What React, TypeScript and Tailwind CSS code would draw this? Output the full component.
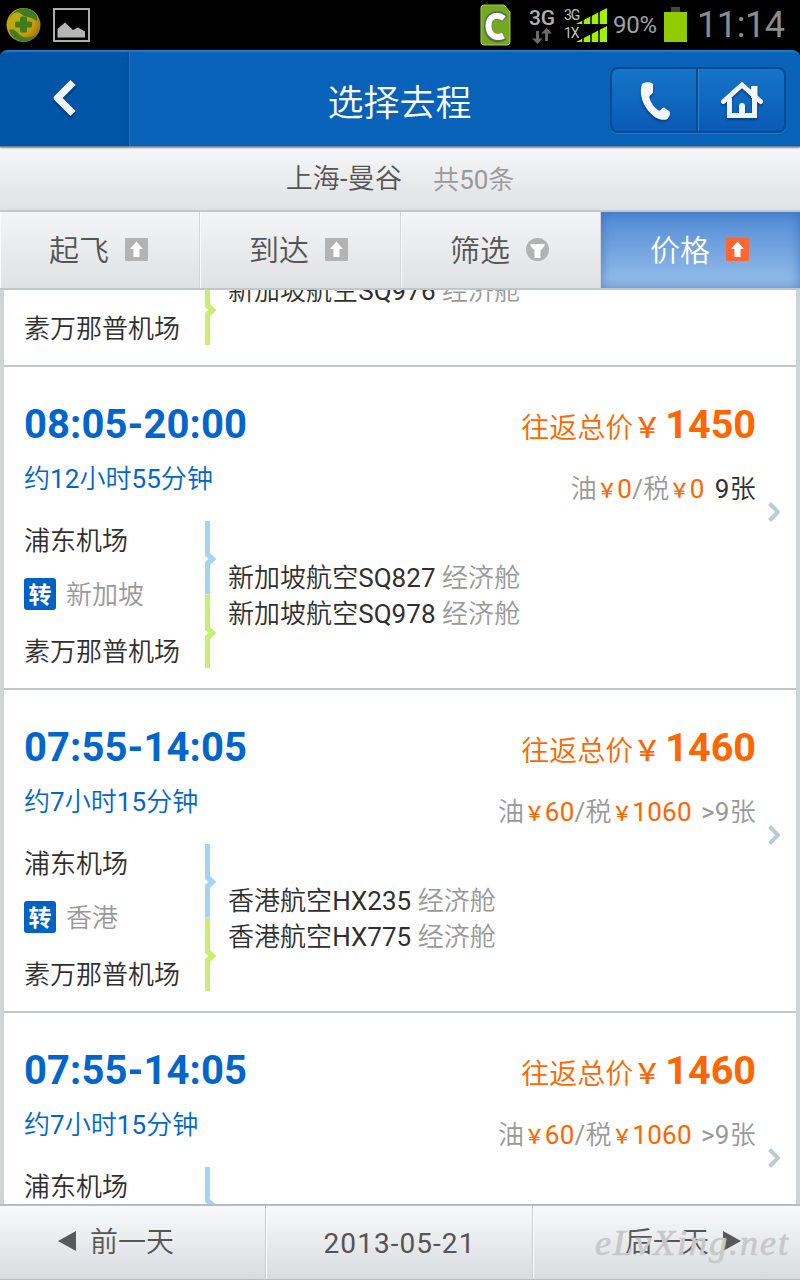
import type { ReactNode } from 'react';

const HAN = /([\u3000-\u303f\u4e00-\u9fff]+)/;

/** Sets Chinese runs in the light CJK face and leaves Latin runs and digits in Roboto. */
function Mixed({ children }: { children: string }) {
  return (
    <>
      {children.split(HAN).map((part, i) =>
        HAN.test(part) ? (
          <span key={i} className="font-['Noto_Sans_CJK_SC',sans-serif] font-[350]">
            {part}
          </span>
        ) : (
          part
        ),
      )}
    </>
  );
}

type Flight = {
  time: string;
  duration: string;
  via: string;
  price: string;
  fuel: string;
  tax: string;
  seats: string;
  scarce?: boolean;
  legs: string[];
};

const flights: Flight[] = [
  {
    time: '08:05-20:00',
    duration: '约12小时55分钟',
    via: '新加坡',
    price: '1450',
    fuel: '0',
    tax: '0',
    seats: '9张',
    scarce: true,
    legs: ['新加坡航空SQ827', '新加坡航空SQ978'],
  },
  {
    time: '07:55-14:05',
    duration: '约7小时15分钟',
    via: '香港',
    price: '1460',
    fuel: '60',
    tax: '1060',
    seats: '>9张',
    legs: ['香港航空HX235', '香港航空HX775'],
  },
];

function StatusBar() {
  return (
    <div className="flex h-[50px] shrink-0 items-center bg-black">
      <svg className="ml-[6px] h-[36px] w-[35px]" viewBox="0 0 35 36">
        <defs>
          <radialGradient id="orb" cx=".35" cy=".35" r=".8">
            <stop offset="0" stopColor="#b5b414" />
            <stop offset=".6" stopColor="#c79a0c" />
            <stop offset="1" stopColor="#8a6408" />
          </radialGradient>
        </defs>
        <circle cx="17.5" cy="18" r="17" fill="url(#orb)" />
        <path d="M3 12C7 1 24-4 31 9L31 14C24 9 19 11 14 6C10 4 6 7 3 12Z" fill="#3f7c28" />
        <path d="M3 23C7 21 10 24 14 28C20 32 26 31 31 27C24 38 8 37 3 23Z" fill="#3f7c28" />
        <path
          d="M15.500 9.500h4a1.500 1.500 0 0 1 1.500 1.500v3.500h3.500a1.500 1.500 0 0 1 1.500 1.500v3a1.500 1.500 0 0 1-1.500 1.500H21V24a1.500 1.500 0 0 1-1.500 1.500h-4A1.500 1.500 0 0 1 14 24v-3.500h-3.500A1.500 1.500 0 0 1 9 19v-3a1.500 1.500 0 0 1 1.500-1.500H14V11a1.500 1.500 0 0 1 1.500-1.500z"
          fill="#3f7d1c"
        />
      </svg>
      <svg className="ml-[12px] h-[34px] w-[37px]" viewBox="0 0 37 34">
        <rect x="1" y="1" width="35" height="32" fill="none" stroke="#a9adab" strokeWidth="2" />
        <path d="M4.500 29.500V21l7.500-6.500L20 22l5-2.500 7 4v6z" fill="#b4b6b4" />
      </svg>
      <div className="grow" />
      <svg className="h-[42px] w-[31px]" viewBox="0 0 31 42">
        <path d="M4 1h20l6 7v30a3 3 0 0 1-3 3H4a3 3 0 0 1-3-3V4a3 3 0 0 1 3-3z" fill="#75a822" stroke="#a6cf4b" />
        <path d="M25 15C18 8 8 11 8 22.500S17 36.500 24.500 32.500" fill="none" stroke="#5a6c50" strokeWidth="8" />
        <path d="M24 14.500C17 9 8.500 12 8.500 22S17 35 23.500 31.500" fill="none" stroke="#fff" strokeWidth="6" />
      </svg>
      <div className="ml-[17px] flex h-[36px] w-[28px] flex-col items-center">
        <span className="text-[21px]/[22px] font-medium text-[#b1b1b1]">3G</span>
        <svg className="-mt-px h-[16px] w-[20px] shrink-0" viewBox="0 0 20 16">
          <path d="M4 3h3v7.500h3.500L5.500 16L0 10.500h4zM13 13h3V5.500h4L14.500 0L9 5.500h4z" fill="#6a6a6a" />
        </svg>
      </div>
      <div className="ml-[8px] flex h-[38px] w-[16px] flex-col text-[14px]/[18px] tracking-[-1px] whitespace-nowrap text-[#c4c4c4]">
        <span>3G</span>
        <span>1X</span>
      </div>
      <svg className="-ml-[6px] h-[34px] w-[33px]" viewBox="0 0 33 34">
        <path d="M2 16L33 0v16zM2 34L33 18v16z" fill="#a3f000" />
        <path d="M9 0v34M17 0v34M25 0v34" stroke="#000" strokeWidth="1.500" />
      </svg>
      <span className="ml-[6px] w-[46px] text-[24px] tracking-[-0.2px] whitespace-nowrap text-[#a0a0a0]">90%</span>
      <svg className="ml-[5px] h-[36px] w-[23px]" viewBox="0 0 23 36">
        <path d="M7 0h9v5H7z" fill="#454545" />
        <path d="M0 5h23v30H0z" fill="#90cc00" />
      </svg>
      <span className="mr-[14px] ml-[10px] w-[89px] text-[36px] font-normal tracking-[-0.4px] whitespace-nowrap text-[#8c8c8c]">
        11:14
      </span>
    </div>
  );
}

function TitleBar() {
  return (
    <header className="z-10 flex h-[97px] shrink-0 items-stretch overflow-hidden rounded-t-lg border-t-2 border-b border-t-[#2277c8] border-b-[#6f7d8e] bg-[#0862b8] shadow-[0_1px_2px_#88888a]">
      <button className="flex w-[129px] items-center justify-center border-r-2 border-[#06509a] bg-[#0055a7] pl-[2px]">
        <svg className="h-[42px] w-[28px] drop-shadow-[0_2px_1px_#00386f]" viewBox="0 0 28 42">
          <path d="M22 4.500L6.500 20L22 35.500" fill="none" stroke="#f1f4fe" strokeWidth="7.400" strokeLinejoin="round" />
        </svg>
      </button>
      <h1 className="flex grow items-center justify-center border-l border-[#1a73c5] pt-[2px] pl-[59px] text-[36px] text-white">
        <Mixed>选择去程</Mixed>
      </h1>
      <div className="mt-[15px] mr-[14px] flex h-[66px] w-[176px] rounded-lg border-2 border-[#084c8f] bg-linear-to-b from-[#1675c8] to-[#0a5ab5] shadow-[0_1px_0_#2878c4]">
        <button className="flex w-[86px] items-center justify-center border-r-2 border-[#084c8f] pt-[3px] pl-[2px]">
          <svg className="h-[40px] w-[32px] drop-shadow-[0_2px_1px_#083d80]" viewBox="0 0 32 40">
            <path
              d="M3 2C6-.5 12-.5 14 2V10.500C12 14 10 13 10.500 16C12 21 15 25.500 19.500 28.500C22 29.500 22.500 25.500 25 25.500L30.500 29.500C32 32 30 36 27.500 37.500C15 41-3 19 3 2z"
              fill="#f3f6fe"
            />
          </svg>
        </button>
        <button className="flex grow items-center justify-center border-l border-[#2a84d0]">
          <svg className="h-[40px] w-[44px] drop-shadow-[0_2px_1px_#083d80]" viewBox="0 0 44 40">
            <path d="M31 6h6.500v12H31z" fill="#f6f8ff" />
            <path d="M3.500 21.500L22 5L40.500 21.500" fill="none" stroke="#f6f8ff" strokeWidth="5" strokeLinecap="round" />
            <path d="M9.500 18v17.500h25V18" fill="none" stroke="#f0f3fe" strokeWidth="5" />
            <path d="M19 35v-9a3 3 0 0 1 6 0v9z" fill="#f0f3fe" />
          </svg>
        </button>
      </div>
    </header>
  );
}

function UpBadge({ active }: { active?: boolean }) {
  return (
    <svg className="h-[24px] w-[23px]" viewBox="0 0 23 24">
      <rect width="23" height="23" rx="1" fill={active ? '#ff6633' : '#b3b3b3'} />
      <path d="M11.500 3.500L18 11h-3.500v8h-6v-8H5z" fill="#fff" />
    </svg>
  );
}

function FilterBadge() {
  return (
    <svg className="h-[24px] w-[23px]" viewBox="0 0 23 24">
      <circle cx="11.500" cy="11.500" r="11.500" fill="#b1b2b2" />
      <path d="M4.500 6h14v2L14.500 12.500V20h-6v-7.500L4.500 8z" fill="#fff" />
    </svg>
  );
}

function Tab({ label, icon, active }: { label: string; icon: ReactNode; active?: boolean }) {
  return (
    <button
      className={
        active
          ? 'flex items-center gap-[16px] bg-linear-to-b from-[#5089d4] to-[#98c0ea] pl-[49px] text-[30px] text-white shadow-[inset_0_0_12px_#3266b0aa]'
          : 'flex items-center gap-[16px] border-r border-l border-r-[#d3d5d7] border-l-[#fafafa] bg-linear-to-b from-[#f3f5f7] to-[#e0e1e3] pl-[48px] text-[30px] text-[#555]'
      }
    >
      <span className="pb-[2px] whitespace-nowrap">
        <Mixed>{label}</Mixed>
      </span>
      {icon}
    </button>
  );
}

function RouteLine({ color }: { color: string }) {
  return (
    <svg className="h-[73.5px] w-[12px]" viewBox="0 0 12 73.5">
      <path d="M0 0h5v32L11.500 38L5 44v29.500H0V41L3.500 38L0 35z" fill={color} />
    </svg>
  );
}

function Leg({ name }: { name: string }) {
  return (
    <div className="h-[36px] text-[26px]/[36px] tracking-[0.04px] whitespace-nowrap text-[#2f2f2f]">
      <Mixed>{name}</Mixed>
      <span className="text-[#999]">
        {' '}
        <Mixed>经济舱</Mixed>
      </span>
    </div>
  );
}

function Fee({ amount }: { amount: string }) {
  return (
    <span className="text-[#ff6600]">
      <span className="text-[20px] font-medium">￥</span>
      {amount}
    </span>
  );
}

function FlightCard({ flight }: { flight: Flight }) {
  return (
    <article className="h-[323px] shrink-0 border-b-2 border-[#c0c7c9] pt-[34px] pl-[20px]">
      <div className="flex h-[107px]">
        <div className="grow">
          <div className="text-[40px]/[48px] font-bold tracking-[0.1px] text-[#0066cc]">{flight.time}</div>
          <div className="text-[26px]/[56px] tracking-[0.05px] text-[#0066cc]">
            <Mixed>{flight.duration}</Mixed>
          </div>
        </div>
        <div className="text-right whitespace-nowrap">
          <div className="flex items-baseline justify-end text-[28px]/[48px] text-[#ff6600]">
            <span>
              <Mixed>往返总价</Mixed>
              <span className="font-medium">￥</span>
            </span>
            <b className="ml-[4px] text-[39.5px]/[48px]">{flight.price}</b>
          </div>
          <div className="mt-[14px] flex items-baseline justify-end text-[26px]/[40px] tracking-[0.3px] text-[#999]">
            <Mixed>油</Mixed>
            <Fee amount={flight.fuel} />
            /<Mixed>税</Mixed>
            <Fee amount={flight.tax} />
            <span className={flight.scarce ? 'ml-[10px] text-[#2f2f2f]' : 'ml-[9px]'}>
              <Mixed>{flight.seats}</Mixed>
            </span>
          </div>
        </div>
        <svg className="mt-[101px] mr-[16px] ml-[12px] h-[20px] w-[12px] shrink-0" viewBox="0 0 12 20">
          <path d="M1.500 1.500L10 10L1.500 18.500" fill="none" stroke="#bccad2" strokeWidth="4" />
        </svg>
      </div>
      <div className="mt-[13px] flex h-[147px]">
        <div className="w-[181px] text-[26px] text-[#2f2f2f]">
          <div className="leading-[36px]">
            <Mixed>浦东机场</Mixed>
          </div>
          <div className="flex h-[70px] items-center gap-[10px] text-[#999]">
            <span className="flex size-[32px] items-center justify-center rounded-[3px] bg-[#0062c4] font-['Noto_Sans_CJK_SC',sans-serif] text-[23px]/[30px] font-bold text-white">
              <span className="-mt-[3px]">转</span>
            </span>
            <span>
              <Mixed>{flight.via}</Mixed>
            </span>
          </div>
          <div className="leading-[41px]">
            <Mixed>素万那普机场</Mixed>
          </div>
        </div>
        <div className="flex w-[23px] flex-col">
          <RouteLine color="#a6d4f0" />
          <RouteLine color="#c8ee74" />
        </div>
        <div className="flex flex-col justify-center pb-[2px]">
          {flight.legs.map((leg) => (
            <Leg key={leg} name={leg} />
          ))}
        </div>
      </div>
    </article>
  );
}

/** Lower end of the entry that is scrolled mostly out of view. */
function ScrolledCard() {
  return (
    <article className="flex h-[77px] shrink-0 items-start border-b-2 border-[#c0c7c9] pl-[20px]">
      <div className="w-[181px] pt-[15px] text-[26px]/[44px] text-[#2f2f2f]">
        <Mixed>素万那普机场</Mixed>
      </div>
      <div className="-mt-[18.5px] w-[23px]">
        <RouteLine color="#c8ee74" />
      </div>
      <div className="-mt-[19px]">
        <Leg name="新加坡航空SQ976" />
      </div>
    </article>
  );
}

export default function App() {
  return (
    <div className="flex h-[1280px] w-[800px] flex-col overflow-hidden bg-black font-[Roboto,'Noto_Sans_CJK_SC',sans-serif]">
      <StatusBar />
      <TitleBar />
      <div className="flex h-[65px] shrink-0 items-center justify-center gap-[31px] border-b-2 border-[#c0c9c9] bg-linear-to-b from-[#f6f7f9] to-[#e0e1e3] text-[26px] text-[#555]">
        <span className="text-[27px] tracking-[0.2px]">
          <Mixed>上海-曼谷</Mixed>
        </span>
        <span className="text-[#999]">
          <Mixed>共50条</Mixed>
        </span>
      </div>
      <nav className="grid h-[78px] shrink-0 grid-cols-[200px_201px_200px_199px] border-b-2 border-[#c0c9c9]">
        <Tab label="起飞" icon={<UpBadge />} />
        <Tab label="到达" icon={<UpBadge />} />
        <Tab label="筛选" icon={<FilterBadge />} />
        <Tab label="价格" icon={<UpBadge active />} active />
      </nav>
      <main className="flex min-h-0 grow flex-col overflow-hidden border-x-4 border-[#cdd5d6] bg-white">
        <ScrolledCard />
        <FlightCard flight={flights[0]} />
        <FlightCard flight={flights[1]} />
        <FlightCard flight={flights[1]} />
      </main>
      <footer className="relative flex h-[76px] shrink-0 border-t-2 border-b border-t-[#b2bec0] border-b-[#b8bec0] bg-linear-to-b from-[#f8f9fa] to-[#d9dcdf] text-[28px] text-[#555]">
        <button className="flex w-[266px] items-center border-r border-[#c8cccf] pl-[58px]">
          <svg className="mr-[14px] mb-[3px] h-[20px] w-[18px]" viewBox="0 0 18 20">
            <path d="M18 0v20L0 10z" fill="#58595b" />
          </svg>
          <span className="pb-[2px]">
            <Mixed>前一天</Mixed>
          </span>
        </button>
        <div className="flex w-[267px] items-center justify-center border-r border-l border-r-[#c8cccf] border-l-white pt-[2px] tracking-[1.05px]">
          2013-05-21
        </div>
        <button className="flex grow items-center border-l border-white pl-[91px]">
          <span className="pb-[2px]">
            <Mixed>后一天</Mixed>
          </span>
          <svg className="mb-[3px] ml-[14px] h-[20px] w-[18px]" viewBox="0 0 18 20">
            <path d="M0 0v20l18-10z" fill="#58595b" />
          </svg>
        </button>
        <span className="absolute top-[14px] right-[10px] font-['Liberation_Serif',serif] text-[36px]/[46px] tracking-[2px] whitespace-nowrap text-[#c8c8c8] italic [-webkit-text-stroke:0.7px_#c8c8c8]">
          eLvXing.net
        </span>
      </footer>
    </div>
  );
}
